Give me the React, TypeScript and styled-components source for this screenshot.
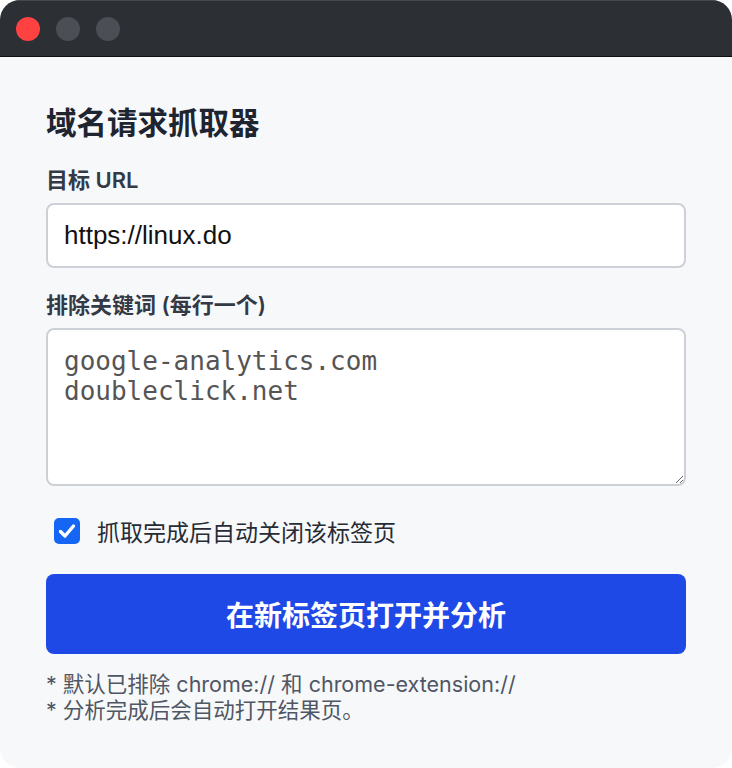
import React, { useState } from "react";
import styled, { createGlobalStyle } from "styled-components";

const GlobalStyle = createGlobalStyle`
  html, body {
    margin: 0;
    padding: 0;
    background: #ffffff;
  }
  * {
    box-sizing: border-box;
  }
`;

const SANS = `Inter, "Noto Sans CJK SC", "Noto Sans", sans-serif`;

const Window = styled.div`
  width: 732px;
  height: 768px;
  border-radius: 20px;
  overflow: hidden;
  background: #f7f8fa;
  display: flex;
  flex-direction: column;
  font-family: ${SANS};
`;

const TitleBar = styled.div`
  height: 57px;
  flex: none;
  background: #2c2f34;
  border-top: 1px solid #46494e;
  border-bottom: 1px solid #0e0f11;
  display: flex;
  align-items: center;
  gap: 16px;
  padding-left: 16px;
`;

const Light = styled.span<{ $color: string }>`
  width: 24px;
  height: 24px;
  border-radius: 50%;
  background: ${(p) => p.$color};
`;

const Content = styled.main`
  padding: 46px 46px 0;
  display: flex;
  flex-direction: column;
`;

const Title = styled.h1`
  margin: 0 0 23px;
  font-size: 30.5px;
  line-height: 40px;
  font-weight: 700;
  color: #1f2530;
`;

const Field = styled.div<{ $gap: number }>`
  display: flex;
  flex-direction: column;
  gap: 9px;
  margin-bottom: ${(p) => p.$gap}px;
`;

const Label = styled.label`
  font-size: 22px;
  line-height: 28px;
  font-weight: 600;
  color: #333a46;
`;

const TextInput = styled.input`
  height: 65px;
  width: 100%;
  border: 2px solid #cdd0d7;
  border-radius: 8px;
  background: #ffffff;
  padding: 0 16px;
  font-family: "Liberation Sans", Arial, sans-serif;
  font-size: 26px;
  color: #111111;
  outline: none;
`;

const TextArea = styled.textarea`
  height: 158px;
  width: 100%;
  border: 2px solid #cdd0d7;
  border-radius: 8px;
  background: #ffffff;
  padding: 16px 16px 12px;
  font-family: "DejaVu Sans Mono", "Liberation Mono", monospace;
  font-size: 26px;
  line-height: 30px;
  color: #555555;
  outline: none;
  resize: vertical;
`;

const CheckRow = styled.label`
  display: flex;
  align-items: center;
  gap: 17px;
  height: 32px;
  padding-left: 8px;
  margin-bottom: 27px;
  font-size: 23px;
  color: #262b35;
  cursor: pointer;
`;

const CheckBox = styled.span<{ $on: boolean }>`
  width: 26px;
  height: 26px;
  border-radius: 5px;
  background: ${(p) => (p.$on ? "#1566f5" : "#ffffff")};
  border: ${(p) => (p.$on ? "none" : "2px solid #9aa0aa")};
  display: flex;
  align-items: center;
  justify-content: center;
`;

const PrimaryButton = styled.button`
  height: 80px;
  width: 100%;
  border: none;
  border-radius: 8px;
  background: #1f49e6;
  color: #ffffff;
  font-family: ${SANS};
  font-size: 28px;
  font-weight: 700;
  cursor: pointer;
  margin-bottom: 17px;
`;

const Notes = styled.div`
  font-size: 21.5px;
  line-height: 26px;
  color: #4f5664;
`;

export default function App() {
  const [closeTab, setCloseTab] = useState(true);

  return (
    <>
      <GlobalStyle />
      <Window>
        <TitleBar>
          <Light $color="#fe4242" />
          <Light $color="#4b4e54" />
          <Light $color="#4b4e54" />
        </TitleBar>
        <Content>
          <Title>域名请求抓取器</Title>

          <Field $gap={23}>
            <Label htmlFor="url">目标 URL</Label>
            <TextInput id="url" defaultValue="https://linux.do" />
          </Field>

          <Field $gap={29}>
            <Label htmlFor="exclude">排除关键词 (每行一个)</Label>
            <TextArea
              id="exclude"
              defaultValue={"google-analytics.com\ndoubleclick.net"}
            />
          </Field>

          <CheckRow onClick={() => setCloseTab(!closeTab)}>
            <CheckBox $on={closeTab}>
              {closeTab && (
                <svg width="20" height="20" viewBox="0 0 20 20">
                  <path
                    d="M3.5 10.5 L8 15 L16.5 5"
                    fill="none"
                    stroke="#ffffff"
                    strokeWidth="3.4"
                    strokeLinecap="round"
                    strokeLinejoin="round"
                  />
                </svg>
              )}
            </CheckBox>
            抓取完成后自动关闭该标签页
          </CheckRow>

          <PrimaryButton>在新标签页打开并分析</PrimaryButton>

          <Notes>
            <div>* 默认已排除 chrome:// 和 chrome-extension://</div>
            <div>* 分析完成后会自动打开结果页。</div>
          </Notes>
        </Content>
      </Window>
    </>
  );
}
